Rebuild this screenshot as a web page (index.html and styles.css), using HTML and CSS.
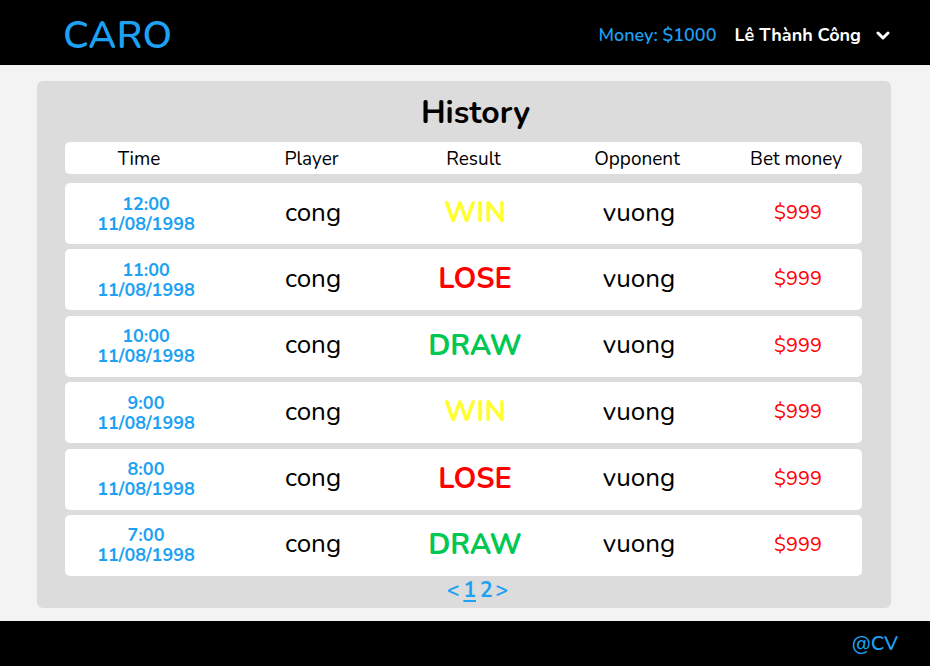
FILE: index.html
```html
<!DOCTYPE html>
<html>
<head>
<meta charset="utf-8">
<link rel="stylesheet" href="styles.css">
</head>
<body>
<header class="topbar">
  <div class="logo">CARO</div>
  <div class="user">
    <span class="money">Money: $1000</span>
    <span class="name">Lê Thành Công</span>
    <svg class="chev" width="14" height="9" viewBox="0 0 14 9"><path d="M2 2 L7 7 L12 2" fill="none" stroke="#fff" stroke-width="3" stroke-linecap="round" stroke-linejoin="round"/></svg>
  </div>
</header>
<main class="page">
  <section class="card">
    <h1 class="title">History</h1>
    <div class="head-row">
      <div class="h-time">Time</div>
      <div>Player</div>
      <div>Result</div>
      <div>Opponent</div>
      <div>Bet money</div>
    </div>
    <div class="rows">
      <div class="row"><div class="time"><div>12:00</div><div>11/08/1998</div></div><div class="plain">cong</div><div class="res win">WIN</div><div class="plain">vuong</div><div class="bet">$999</div></div>
      <div class="row"><div class="time"><div>11:00</div><div>11/08/1998</div></div><div class="plain">cong</div><div class="res lose">LOSE</div><div class="plain">vuong</div><div class="bet">$999</div></div>
      <div class="row"><div class="time"><div>10:00</div><div>11/08/1998</div></div><div class="plain">cong</div><div class="res draw">DRAW</div><div class="plain">vuong</div><div class="bet">$999</div></div>
      <div class="row"><div class="time"><div>9:00</div><div>11/08/1998</div></div><div class="plain">cong</div><div class="res win">WIN</div><div class="plain">vuong</div><div class="bet">$999</div></div>
      <div class="row"><div class="time"><div>8:00</div><div>11/08/1998</div></div><div class="plain">cong</div><div class="res lose">LOSE</div><div class="plain">vuong</div><div class="bet">$999</div></div>
      <div class="row"><div class="time"><div>7:00</div><div>11/08/1998</div></div><div class="plain">cong</div><div class="res draw">DRAW</div><div class="plain">vuong</div><div class="bet">$999</div></div>
    </div>
    <div class="pager"><span>&lt;</span><span class="cur">1</span><span>2</span><span>&gt;</span></div>
  </section>
</main>
<footer class="footer">@CV</footer>
</body>
</html>
```

FILE: styles.css
```css
* { box-sizing: border-box; }
html, body { margin: 0; padding: 0; }
body {
  width: 930px;
  height: 666px;
  background: #f3f3f3;
  font-family: "Nunito", "Lato", "Open Sans", sans-serif;
  color: #000;
  display: flex;
  flex-direction: column;
}
.topbar {
  height: 65px;
  background: #000;
  display: flex;
  align-items: center;
  justify-content: space-between;
  padding: 0 40px 0 63px;
}
.logo {
  color: #1da1f2;
  font-size: 38px;
  font-weight: 600;
  letter-spacing: 0.3px;
  margin-top: 6px;
}
.user {
  display: flex;
  align-items: center;
  margin-top: 4px;
}
.money {
  color: #1da1f2;
  font-size: 18px;
  font-weight: 600;
}
.name {
  color: #fff;
  font-size: 18px;
  font-weight: 700;
  margin-left: 18px;
}
.chev { margin-left: 15px; margin-top: 2px; }
.page {
  height: 556px;
  padding: 16px 39px 0 37px;
}
.card {
  background: #dcdcdc;
  border-radius: 6px;
  height: 527px;
  padding: 11px 29px 0 28px;
  display: flex;
  flex-direction: column;
}
.title {
  margin: 0;
  height: 40px;
  line-height: 42px;
  text-align: center;
  font-size: 32px;
  font-weight: 700;
  padding-left: 24px;
}
.head-row {
  margin-top: 10px;
  height: 32px;
  background: #fff;
  border-radius: 5px;
  display: grid;
  grid-template-columns: 148px 197px 127px 200px 118px;
  align-items: center;
  text-align: center;
  font-size: 19px;
  padding-top: 1px;
}
.rows {
  margin-top: 9px;
  display: flex;
  flex-direction: column;
  gap: 5.4px;
}
.row {
  height: 61px;
  background: #fff;
  border-radius: 5px;
  display: grid;
  grid-template-columns: 162px 172px 152px 176px 135px;
  align-items: center;
  text-align: center;
}
.time {
  color: #1da1f2;
  font-weight: 700;
  font-size: 18px;
  line-height: 20px;
}
.plain { font-size: 26px; margin-top: -3px; }
.res { font-size: 29px; font-weight: 700; margin-top: -2px; }
.win { color: #ffff2e; }
.lose { color: #ff0000; }
.draw { color: #00c853; }
.bet { color: #ff0000; font-size: 20px; margin-top: -2px; margin-left: 7px; }
.pager {
  margin-top: 2px;
  height: 24px;
  display: flex;
  justify-content: center;
  align-items: center;
  gap: 3px;
  color: #1da1f2;
  font-size: 21px;
  font-weight: 700;
  padding-left: 28px;
}
.pager .cur {
  text-decoration: underline;
  text-decoration-thickness: 2px;
  text-underline-offset: 3px;
  padding: 0 1px;
}
.footer {
  margin-top: 0;
  height: 45px;
  background: #000;
  color: #1da1f2;
  font-size: 20px;
  font-weight: 600;
  display: flex;
  align-items: center;
  justify-content: flex-end;
  padding-right: 32px;
}
```
